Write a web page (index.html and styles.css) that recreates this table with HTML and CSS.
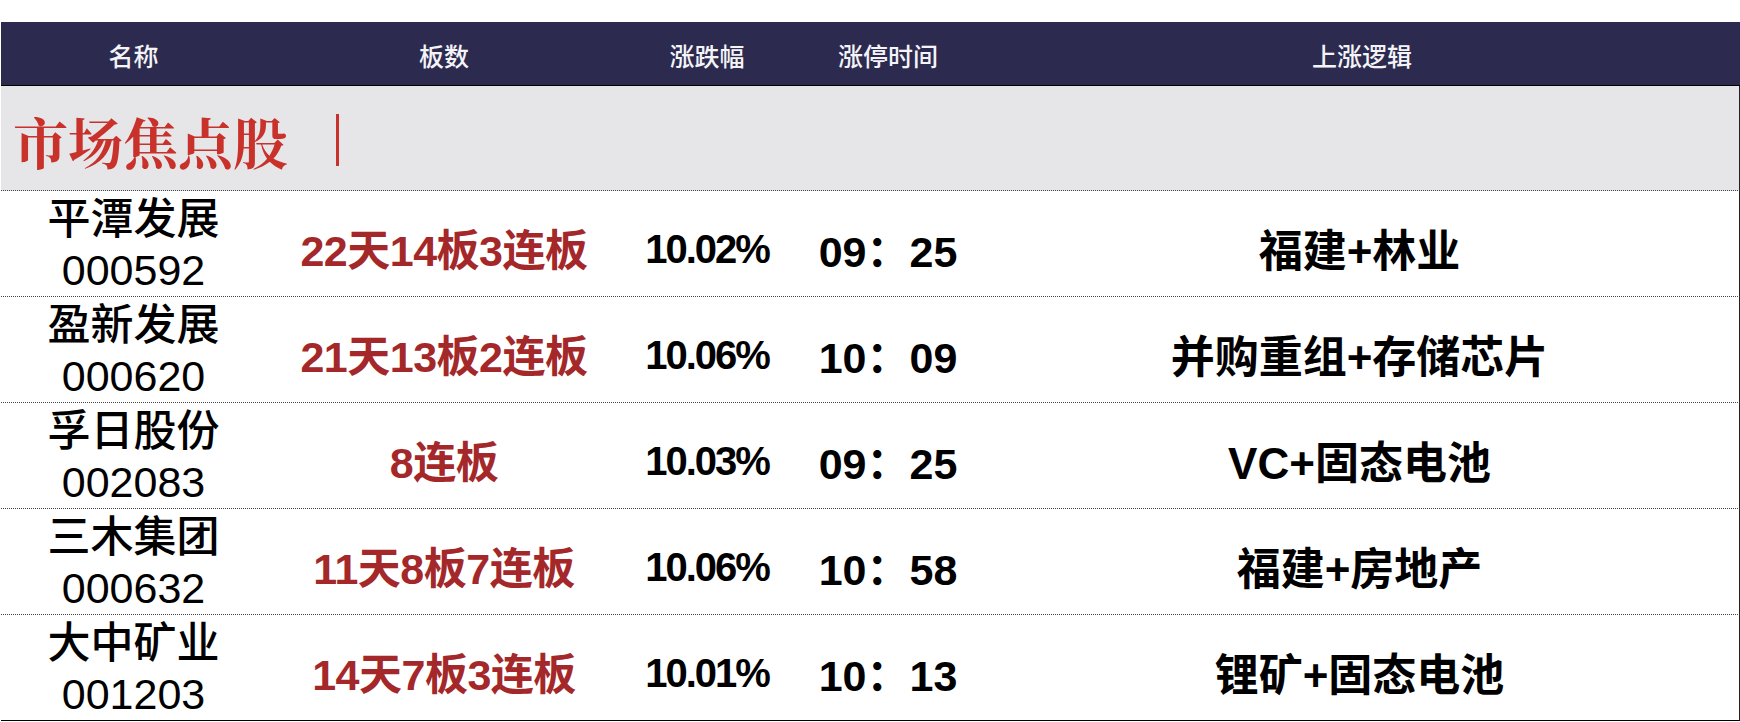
FILE: index.html
```html
<!DOCTYPE html>
<html lang="zh-CN">
<head>
<meta charset="utf-8">
<title>市场焦点股</title>
<link rel="stylesheet" href="styles.css">
</head>
<body>
<div class="sheet">
  <div class="head">
    <div class="hcell">名称</div>
    <div class="hcell">板数</div>
    <div class="hcell">涨跌幅</div>
    <div class="hcell">涨停时间</div>
    <div class="hcell">上涨逻辑</div>
  </div>
  <div class="band">
    <span class="band-title">市场焦点股</span>
    <span class="band-bar"></span>
  </div>
  <div class="row">
    <div class="name"><span>平潭发展</span><span class="code">000592</span></div>
    <div class="board">22天14板3连板</div>
    <div class="pct">10.02%</div>
    <div class="time">09：25</div>
    <div class="logic">福建+林业</div>
  </div>
  <div class="row">
    <div class="name"><span>盈新发展</span><span class="code">000620</span></div>
    <div class="board">21天13板2连板</div>
    <div class="pct">10.06%</div>
    <div class="time">10：09</div>
    <div class="logic">并购重组+存储芯片</div>
  </div>
  <div class="row">
    <div class="name"><span>孚日股份</span><span class="code">002083</span></div>
    <div class="board">8连板</div>
    <div class="pct">10.03%</div>
    <div class="time">09：25</div>
    <div class="logic">VC+固态电池</div>
  </div>
  <div class="row">
    <div class="name"><span>三木集团</span><span class="code">000632</span></div>
    <div class="board">11天8板7连板</div>
    <div class="pct">10.06%</div>
    <div class="time">10：58</div>
    <div class="logic">福建+房地产</div>
  </div>
  <div class="row last">
    <div class="name"><span>大中矿业</span><span class="code">001203</span></div>
    <div class="board">14天7板3连板</div>
    <div class="pct">10.01%</div>
    <div class="time">10：13</div>
    <div class="logic">锂矿+固态电池</div>
  </div>
</div>
</body>
</html>
```
FILE: styles.css
```css
* { box-sizing: border-box; }
html, body {
  margin: 0;
  padding: 0;
  background: #ffffff;
}
body {
  font-family: "Liberation Sans", "Noto Sans CJK SC", sans-serif;
  color: #000;
  overflow: hidden;
}
.sheet {
  width: 1740px;
  padding-top: 22px;
  padding-left: 1px;
}
.head {
  display: grid;
  grid-template-columns: 265px 356px 170px 192px 1fr;
  height: 64px;
  background: #2c2b4f;
  border-bottom: 1px solid #000;
  align-items: center;
}
.hcell {
  text-align: center;
  color: #f4f4f8;
  font-family: "Noto Sans CJK SC", sans-serif;
  font-size: 25px;
  font-weight: 500;
  padding-top: 2px;
}
.band {
  height: 105px;
  background: #e6e6e8;
  border-bottom: 1px dotted #444;
  border-right: 1px solid #222;
  display: flex;
  align-items: center;
  padding-left: 12px;
  padding-top: 4px;
}
.band-title {
  font-family: "Noto Serif CJK SC", "Noto Sans CJK SC", serif;
  font-size: 55px;
  font-weight: 700;
  color: #c9312b;
  line-height: 1;
}
.band-bar {
  width: 3px;
  height: 52px;
  background: #c9312b;
  margin-left: 48px;
}
.row {
  display: grid;
  grid-template-columns: 265px 356px 170px 192px 1fr;
  height: 106px;
  border-bottom: 1px dotted #444;
  border-right: 1px solid #222;
  align-items: center;
  font-size: 43px;
}
.row.last {
  border-bottom: 1px solid #000;
}
.name {
  display: flex;
  flex-direction: column;
  align-items: center;
  line-height: 51px;
  font-weight: 500;
  padding-top: 2px;
}
.code {
  font-weight: 400;
}
.board {
  text-align: center;
  color: #a4282a;
  font-weight: 700;
  letter-spacing: -0.5px;
  padding-top: 6px;
}
.pct {
  text-align: center;
  font-weight: 700;
  font-size: 40px;
  letter-spacing: -2px;
  padding-top: 12px;
}
.time {
  text-align: center;
  font-weight: 700;
  padding-top: 8px;
}
.logic {
  text-align: center;
  font-weight: 700;
  font-size: 44px;
  padding-top: 8px;
  padding-right: 4px;
}
```
